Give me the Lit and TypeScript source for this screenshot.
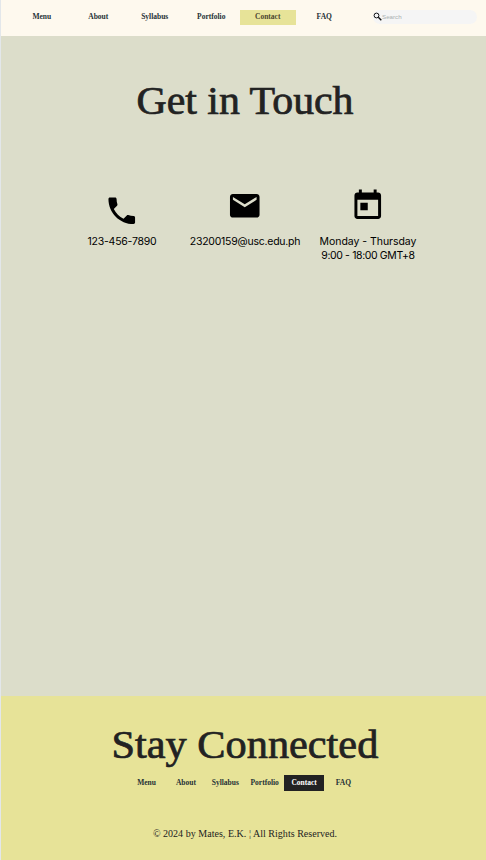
import { LitElement, html, css, svg } from "lit";
import { customElement } from "lit/decorators.js";
import { classMap } from "lit/directives/class-map.js";

const pages = ["Menu", "About", "Syllabus", "Portfolio", "Contact", "FAQ"];
const current = "Contact";

const icons = {
  phone: svg`<path d="M6.620 10.790c1.440 2.830 3.760 5.140 6.590 6.590l2.200-2.200c.27-.27.67-.36 1.020-.24 1.120.37 2.330.57 3.570.57.55 0 1 .45 1 1V20c0 .55-.45 1-1 1-9.390 0-17-7.610-17-17 0-.55.45-1 1-1h3.500c.55 0 1 .45 1 1 0 1.250.2 2.450.57 3.570.11.35.03.74-.25 1.020l-2.200 2.200z"/>`,
  mail: svg`<path d="M20 4H4c-1.100 0-1.990.9-1.990 2L2 18c0 1.100.9 2 2 2h16c1.100 0 2-.9 2-2V6c0-1.100-.9-2-2-2zm0 4l-8 5-8-5V6l8 5 8-5v2z"/>`,
  day: svg`<path d="M19 3h-1V1h-2v2H8V1H6v2H5c-1.110 0-1.990.9-1.990 2L3 19c0 1.100.89 2 2 2h14c1.100 0 2-.9 2-2V5c0-1.100-.9-2-2-2zm0 16H5V8h14v11zM7 10h5v5H7z"/>`,
};

@customElement("app-root")
export class AppRoot extends LitElement {
  static styles = css`
    :host {
      display: flex;
      flex-direction: column;
      box-sizing: border-box;
      height: 860px;
      border-left: 1.500px solid #e3e7ea;
      background: #dcddca;
      color: #222;
      font-family: "Liberation Serif", serif;
    }
    header {
      display: flex;
      align-items: flex-start;
      box-sizing: border-box;
      height: 36px;
      padding: 9.500px 9px 0 12.500px;
      background: #fef9ee;
    }
    nav {
      display: flex;
      color: #263236;
      font-size: 7.500px;
      font-weight: 700;
      line-height: 15px;
      text-align: center;
    }
    .link { height: 15px; white-space: nowrap; }
    .top { line-height: 13.500px; }
    .top .link { width: 56.500px; }
    .top .active { background: #e7e398; color: #4b4630; }
    .search {
      display: flex;
      align-items: center;
      box-sizing: border-box;
      width: 104px;
      height: 14px;
      margin-left: auto;
      border-radius: 7px;
      background: #f5f5f5;
      color: #a9b0b0;
      font: 6.200px/14px "Liberation Sans", sans-serif;
    }
    .search svg { width: 9px; height: 9px; }
    main { flex: 1; padding-left: 3px; }
    h1 {
      margin: 0;
      font-size: 39px;
      font-weight: 400;
      line-height: 46px;
      text-align: center;
      white-space: nowrap;
      -webkit-text-stroke: 0.700px #222;
    }
    .touch { margin-top: 42px; transform: scaleX(1.073); }
    .stay { transform: scaleX(1.085); }
    .cards {
      display: grid;
      grid-template-columns: repeat(3, 123px);
      justify-content: center;
      margin-top: 63.500px;
      color: #000;
      font: 10.500px/14px Inter, sans-serif;
      text-align: center;
    }
    .card { white-space: nowrap; }
    .pic { display: flex; justify-content: center; height: 47.500px; }
    .pic svg { width: 35.500px; height: 35.500px; fill: #000; }
    .phone svg { margin-top: 5px; }
    .tel { letter-spacing: -0.240px; }
    .email { letter-spacing: -0.240px; }
    .days { letter-spacing: -0.040px; }
    .hours { letter-spacing: -0.380px; }
    footer {
      display: flex;
      flex-direction: column;
      align-items: center;
      box-sizing: border-box;
      height: 164px;
      padding: 26px 0 0 3px;
      background: #e7e398;
    }
    .bottom { margin-top: 7px; line-height: 16px; }
    .bottom .link { width: 39.400px; height: 16px; }
    .bottom .active { background: #222; color: #fff; }
    .legal { margin-top: 36px; font-size: 10px; line-height: 14px; letter-spacing: 0.030px; }
  `;

  private links() {
    return pages.map(
      (p) => html`<div class=${classMap({ link: true, active: p === current })}>${p}</div>`
    );
  }

  render() {
    return html`
      <header>
        <nav class="top">${this.links()}</nav>
        <div class="search">
          <svg viewBox="0 0 9 9" fill="none" stroke="#111">
            <circle cx="3.500" cy="3.500" r="2.400" stroke-width="1"/>
            <path d="M5.300 5.300L8.300 8.300" stroke-width="1.400"/>
          </svg>
          Search
        </div>
      </header>
      <main>
        <h1 class="touch">Get in Touch</h1>
        <div class="cards">
          <div class="card">
            <div class="pic phone"><svg viewBox="0 0 24 24">${icons.phone}</svg></div>
            <div class="tel">123-456-7890</div>
          </div>
          <div class="card">
            <div class="pic mail"><svg viewBox="0 0 24 24">${icons.mail}</svg></div>
            <div class="email">23200159@usc.edu.ph</div>
          </div>
          <div class="card">
            <div class="pic day"><svg viewBox="0 0 24 24">${icons.day}</svg></div>
            <div class="days">Monday - Thursday</div>
            <div class="hours">9:00 - 18:00 GMT+8</div>
          </div>
        </div>
      </main>
      <footer>
        <h1 class="stay">Stay Connected</h1>
        <nav class="bottom">${this.links()}</nav>
        <div class="legal">© 2024 by Mates, E.K. ¦ All Rights Reserved.</div>
      </footer>
    `;
  }
}
